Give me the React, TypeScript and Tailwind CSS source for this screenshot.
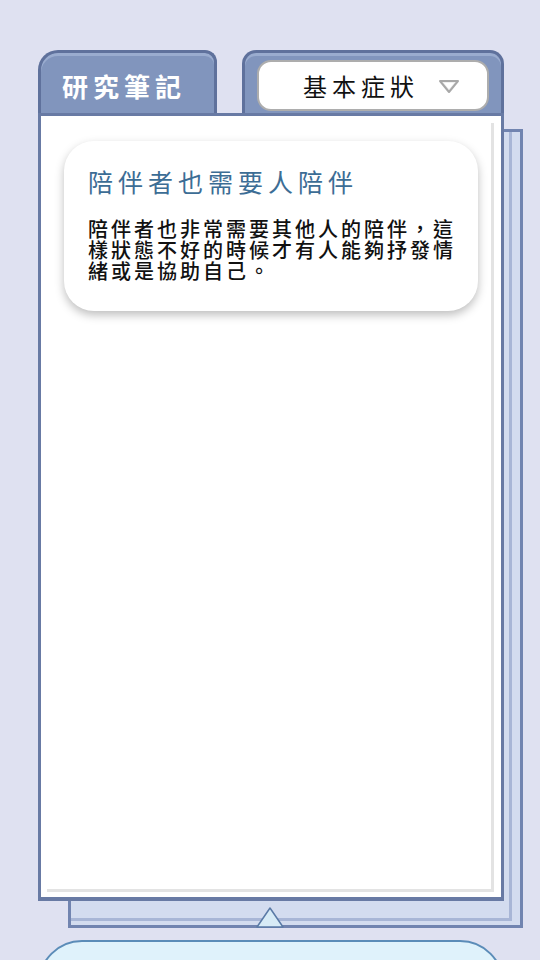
const cjk = { fontFamily: '"Noto Sans CJK TC", "Noto Sans", sans-serif' };

function DownTriangle() {
  return (
    <svg width="22" height="15" viewBox="0 0 22 15">
      <polygon points="2,2 20,2 11,13" fill="#f0f0f0" stroke="#a8a8a8" strokeWidth="2" strokeLinejoin="round" />
      <polygon points="6,4 16,4 11,10" fill="#ffffff" />
    </svg>
  );
}

function UpTriangle() {
  return (
    <svg width="28" height="21" viewBox="0 0 28 21">
      <polygon points="14,1 27,20 1,20" fill="#d7ebf6" stroke="#5a7aa6" strokeWidth="1.5" strokeLinejoin="round" />
    </svg>
  );
}

export default function App() {
  return (
    <div className="h-[960px] w-[540px] overflow-hidden bg-[#dfe1f1] pl-[38px] pt-[50px]" style={cjk}>
      {/* pestañas */}
      <div className="flex h-[63px] w-[466px] items-stretch gap-[25px]">
        <div className="flex w-[179px] items-center rounded-tl-[20px] rounded-tr-[12px] border-[3px] border-b-0 border-[#5f719c] bg-[#8195bd] pl-[21px] pt-[4px] shadow-[inset_0_3px_0_#9aaccf]">
          <span className="text-[26px] font-bold tracking-[5px] text-white">研究筆記</span>
        </div>
        <div className="flex flex-1 rounded-t-[14px] border-[3px] border-b-0 border-[#5f719c] bg-[#8195bd] px-[12px] pt-[7px] shadow-[inset_0_3px_0_#9aaccf]">
          <div className="flex h-[51px] flex-1 items-center rounded-[14px] border-2 border-[#adadad] bg-white pl-[44px]">
            <span className="text-[24px] tracking-[5px] text-[#111]">基本症狀</span>
            <span className="ml-[19px] mt-[2px] flex">
              <DownTriangle />
            </span>
          </div>
        </div>
      </div>

      {/* hojas */}
      <div className="grid w-[485px]">
        <div className="col-start-1 row-start-1 ml-[30px] mt-[16px] h-[799px] border-[3px] border-[#7184b0] bg-[#d3dcef]">
          <div className="h-[789px] w-[441px] border-b-[3px] border-r-[3px] border-[#a8b6d6]" />
        </div>

        <div className="col-start-1 row-start-1 mb-[27px] mr-[19px] h-[788px] border-[3px] border-b-[4px] border-[#687aa4] bg-white">
          <div className="ml-[6px] mr-[7px] mt-[7px] h-[769px] border-b-[3px] border-r-[3px] border-[#e3e3e3] pl-[17px] pt-[18px]">
            <div className="w-[414px] rounded-[30px] bg-white pb-[30px] pl-[24px] pr-[18px] pt-[24px] shadow-[0_4px_10px_rgba(0,0,0,0.26)]">
              <h2 className="text-[25px] leading-[32px] tracking-[5px] text-[#3c6d95]">陪伴者也需要人陪伴</h2>
              <p className="mt-[21px] text-[20px] font-medium leading-[21px] tracking-[3px] text-[#111]">
                陪伴者也非常需要其他人的陪伴，這樣狀態不好的時候才有人能夠抒發情緒或是協助自己。
              </p>
            </div>
          </div>
        </div>

        <div className="col-start-1 row-start-1 ml-[218px] flex self-end justify-self-start">
          <UpTriangle />
        </div>
      </div>

      {/* tarjeta inferior */}
      <div className="mt-[12px] h-[60px] w-[466px] rounded-t-[44px] border-2 border-[#5b8cb8] bg-[#dff2fb]" />
    </div>
  );
}
